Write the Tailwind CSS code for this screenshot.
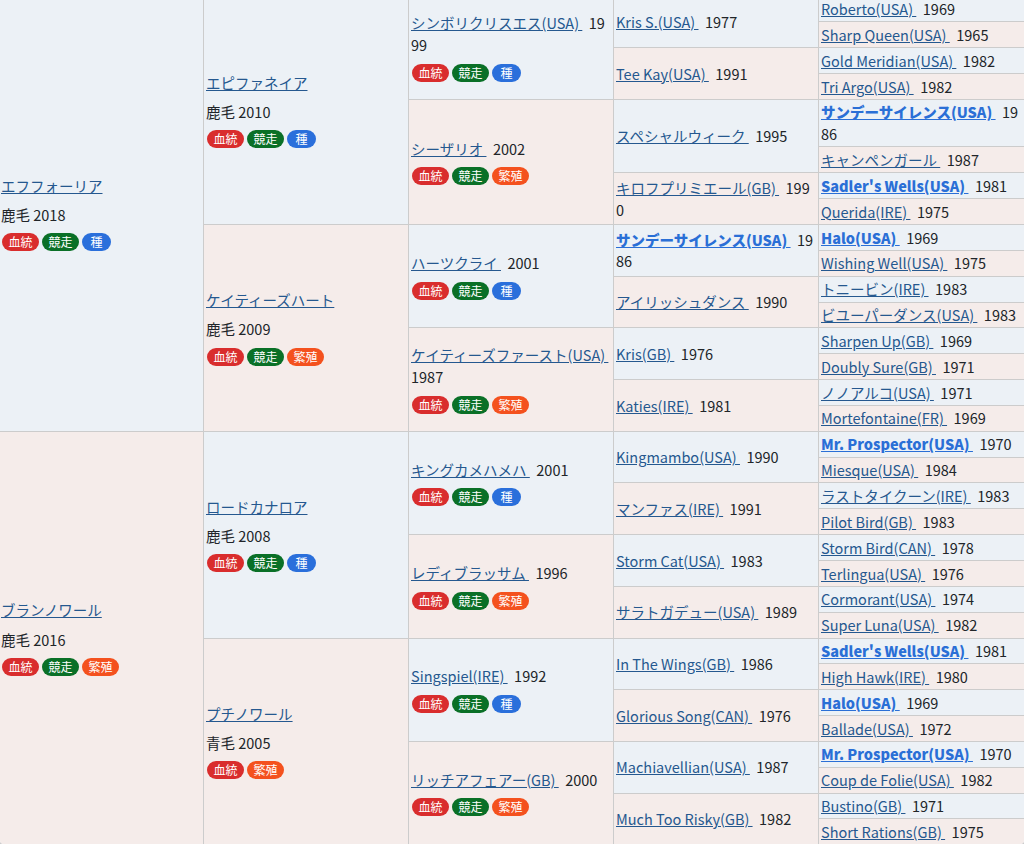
<!DOCTYPE html>
<html lang="ja">
<head>
    <meta charset="UTF-8">
    <meta name="viewport" content="width=device-width, initial-scale=1.0">
    <title>血統表</title>
    <script src="https://cdn.jsdelivr.net/npm/@tailwindcss/browser@4"></script>
</head>
<body class="h-screen overflow-hidden bg-[#ccc] text-[14.5px] leading-[21.75px] text-[#212529] font-['Noto_Sans_CJK_JP',sans-serif]">
  <div class="h-screen overflow-hidden rounded-b-[4px] bg-white">
    <table class="-mt-[4.5px] -ml-[2px] w-[1027px] table-fixed border-collapse break-all [&_td]:border [&_td]:border-[#ccc] [&_td]:px-[2px] [&_td]:py-[1.55px] [&_a]:text-[#25588f] [&_a]:underline [&_a.b]:font-black [&_a.b]:text-[#2a6fd6] [&_.t]:inline-block [&_.t]:h-[18px] [&_.t]:min-w-[29px] [&_.t]:rounded-full [&_.t]:px-[6.5px] [&_.t]:text-center [&_.t]:text-[12px] [&_.t]:leading-[18px] [&_.t]:text-white [&_.p]:flex [&_.p]:gap-[3px] [&_.p]:ml-[1px] [&_.p]:mt-[7.5px] [&_.p]:mb-[8px] [&_.q]:flex [&_.q]:gap-[3px] [&_.q]:ml-[1px] [&_.q]:mt-[8px] [&_.q]:mb-[1px] [&_.n]:mb-[7.5px] [&_.n]:mt-[7px]">
        <tbody>
            <tr>
                <td rowspan="16" class="w-[205px] bg-[#ecf1f6]">
                    <div class="n"><a>エフフォーリア</a></div>
                    <div>鹿毛 2018</div>
                    <div class="p"><span class="t bg-[#d92d2d]">血統</span><span class="t bg-[#0a7027]">競走</span><span class="t bg-[#2a6fdb]">種</span></div>
                </td>
                <td rowspan="8" class="w-[205px] bg-[#ecf1f6]">
                    <div class="n"><a>エピファネイア</a></div>
                    <div>鹿毛 2010</div>
                    <div class="p"><span class="t bg-[#d92d2d]">血統</span><span class="t bg-[#0a7027]">競走</span><span class="t bg-[#2a6fdb]">種</span></div>
                </td>
                <td rowspan="4" class="w-[205px] bg-[#ecf1f6]">
                    <a>シンボリクリスエス(USA)&nbsp;</a>&nbsp; 1999
                    <div class="q"><span class="t bg-[#d92d2d]">血統</span><span class="t bg-[#0a7027]">競走</span><span class="t bg-[#2a6fdb]">種</span></div>
                </td>
                <td rowspan="2" class="w-[205px] bg-[#ecf1f6]"><a>Kris S.(USA)&nbsp;</a>&nbsp; 1977</td>
                <td class="bg-[#ecf1f6]"><a>Roberto(USA)&nbsp;</a>&nbsp; 1969</td>
            </tr>
            <tr><td class="bg-[#f5ecea]"><a>Sharp Queen(USA)&nbsp;</a>&nbsp; 1965</td></tr>
            <tr>
                <td rowspan="2" class="bg-[#f5ecea]"><a>Tee Kay(USA)&nbsp;</a>&nbsp; 1991</td>
                <td class="bg-[#ecf1f6]"><a>Gold Meridian(USA)&nbsp;</a>&nbsp; 1982</td>
            </tr>
            <tr><td class="bg-[#f5ecea]"><a>Tri Argo(USA)&nbsp;</a>&nbsp; 1982</td></tr>
            <tr>
                <td rowspan="4" class="bg-[#f5ecea]">
                    <a>シーザリオ&nbsp;</a>&nbsp; 2002
                    <div class="q"><span class="t bg-[#d92d2d]">血統</span><span class="t bg-[#0a7027]">競走</span><span class="t bg-[#f4511e]">繁殖</span></div>
                </td>
                <td rowspan="2" class="bg-[#ecf1f6]"><a>スペシャルウィーク&nbsp;</a>&nbsp; 1995</td>
                <td class="bg-[#ecf1f6]"><a class="b">サンデーサイレンス(USA)&nbsp;</a>&nbsp; 1986</td>
            </tr>
            <tr><td class="bg-[#f5ecea]"><a>キャンペンガール&nbsp;</a>&nbsp; 1987</td></tr>
            <tr>
                <td rowspan="2" class="bg-[#f5ecea]"><a>キロフプリミエール(GB)&nbsp;</a>&nbsp; 1990</td>
                <td class="bg-[#ecf1f6]"><a class="b">Sadler's Wells(USA)&nbsp;</a>&nbsp; 1981</td>
            </tr>
            <tr><td class="bg-[#f5ecea]"><a>Querida(IRE)&nbsp;</a>&nbsp; 1975</td></tr>
            <tr>
                <td rowspan="8" class="bg-[#f5ecea]">
                    <div class="n"><a>ケイティーズハート</a></div>
                    <div>鹿毛 2009</div>
                    <div class="p"><span class="t bg-[#d92d2d]">血統</span><span class="t bg-[#0a7027]">競走</span><span class="t bg-[#f4511e]">繁殖</span></div>
                </td>
                <td rowspan="4" class="bg-[#ecf1f6]">
                    <a>ハーツクライ&nbsp;</a>&nbsp; 2001
                    <div class="q"><span class="t bg-[#d92d2d]">血統</span><span class="t bg-[#0a7027]">競走</span><span class="t bg-[#2a6fdb]">種</span></div>
                </td>
                <td rowspan="2" class="bg-[#ecf1f6]"><a class="b">サンデーサイレンス(USA)&nbsp;</a>&nbsp; 1986</td>
                <td class="bg-[#ecf1f6]"><a class="b">Halo(USA)&nbsp;</a>&nbsp; 1969</td>
            </tr>
            <tr><td class="bg-[#f5ecea]"><a>Wishing Well(USA)&nbsp;</a>&nbsp; 1975</td></tr>
            <tr>
                <td rowspan="2" class="bg-[#f5ecea]"><a>アイリッシュダンス&nbsp;</a>&nbsp; 1990</td>
                <td class="bg-[#ecf1f6]"><a>トニービン(IRE)&nbsp;</a>&nbsp; 1983</td>
            </tr>
            <tr><td class="bg-[#f5ecea]"><a>ビユーパーダンス(USA)&nbsp;</a>&nbsp; 1983</td></tr>
            <tr>
                <td rowspan="4" class="bg-[#f5ecea]">
                    <a>ケイティーズファースト(USA)&nbsp;</a> 1987
                    <div class="q"><span class="t bg-[#d92d2d]">血統</span><span class="t bg-[#0a7027]">競走</span><span class="t bg-[#f4511e]">繁殖</span></div>
                </td>
                <td rowspan="2" class="bg-[#ecf1f6]"><a>Kris(GB)&nbsp;</a>&nbsp; 1976</td>
                <td class="bg-[#ecf1f6]"><a>Sharpen Up(GB)&nbsp;</a>&nbsp; 1969</td>
            </tr>
            <tr><td class="bg-[#f5ecea]"><a>Doubly Sure(GB)&nbsp;</a>&nbsp; 1971</td></tr>
            <tr>
                <td rowspan="2" class="bg-[#f5ecea]"><a>Katies(IRE)&nbsp;</a>&nbsp; 1981</td>
                <td class="bg-[#ecf1f6]"><a>ノノアルコ(USA)&nbsp;</a>&nbsp; 1971</td>
            </tr>
            <tr><td class="bg-[#f5ecea]"><a>Mortefontaine(FR)&nbsp;</a>&nbsp; 1969</td></tr>
            <tr>
                <td rowspan="16" class="bg-[#f5ecea]">
                    <div class="n"><a>ブランノワール</a></div>
                    <div>鹿毛 2016</div>
                    <div class="p"><span class="t bg-[#d92d2d]">血統</span><span class="t bg-[#0a7027]">競走</span><span class="t bg-[#f4511e]">繁殖</span></div>
                </td>
                <td rowspan="8" class="bg-[#ecf1f6]">
                    <div class="n"><a>ロードカナロア</a></div>
                    <div>鹿毛 2008</div>
                    <div class="p"><span class="t bg-[#d92d2d]">血統</span><span class="t bg-[#0a7027]">競走</span><span class="t bg-[#2a6fdb]">種</span></div>
                </td>
                <td rowspan="4" class="bg-[#ecf1f6]">
                    <a>キングカメハメハ&nbsp;</a>&nbsp; 2001
                    <div class="q"><span class="t bg-[#d92d2d]">血統</span><span class="t bg-[#0a7027]">競走</span><span class="t bg-[#2a6fdb]">種</span></div>
                </td>
                <td rowspan="2" class="bg-[#ecf1f6]"><a>Kingmambo(USA)&nbsp;</a>&nbsp; 1990</td>
                <td class="bg-[#ecf1f6]"><a class="b">Mr. Prospector(USA)&nbsp;</a>&nbsp; 1970</td>
            </tr>
            <tr><td class="bg-[#f5ecea]"><a>Miesque(USA)&nbsp;</a>&nbsp; 1984</td></tr>
            <tr>
                <td rowspan="2" class="bg-[#f5ecea]"><a>マンファス(IRE)&nbsp;</a>&nbsp; 1991</td>
                <td class="bg-[#ecf1f6]"><a>ラストタイクーン(IRE)&nbsp;</a>&nbsp; 1983</td>
            </tr>
            <tr><td class="bg-[#f5ecea]"><a>Pilot Bird(GB)&nbsp;</a>&nbsp; 1983</td></tr>
            <tr>
                <td rowspan="4" class="bg-[#f5ecea]">
                    <a>レディブラッサム&nbsp;</a>&nbsp; 1996
                    <div class="q"><span class="t bg-[#d92d2d]">血統</span><span class="t bg-[#0a7027]">競走</span><span class="t bg-[#f4511e]">繁殖</span></div>
                </td>
                <td rowspan="2" class="bg-[#ecf1f6]"><a>Storm Cat(USA)&nbsp;</a>&nbsp; 1983</td>
                <td class="bg-[#ecf1f6]"><a>Storm Bird(CAN)&nbsp;</a>&nbsp; 1978</td>
            </tr>
            <tr><td class="bg-[#f5ecea]"><a>Terlingua(USA)&nbsp;</a>&nbsp; 1976</td></tr>
            <tr>
                <td rowspan="2" class="bg-[#f5ecea]"><a>サラトガデュー(USA)&nbsp;</a>&nbsp; 1989</td>
                <td class="bg-[#ecf1f6]"><a>Cormorant(USA)&nbsp;</a>&nbsp; 1974</td>
            </tr>
            <tr><td class="bg-[#f5ecea]"><a>Super Luna(USA)&nbsp;</a>&nbsp; 1982</td></tr>
            <tr>
                <td rowspan="8" class="bg-[#f5ecea]">
                    <div class="n"><a>プチノワール</a></div>
                    <div>青毛 2005</div>
                    <div class="p"><span class="t bg-[#d92d2d]">血統</span><span class="t bg-[#f4511e]">繁殖</span></div>
                </td>
                <td rowspan="4" class="bg-[#ecf1f6]">
                    <a>Singspiel(IRE)&nbsp;</a>&nbsp; 1992
                    <div class="q"><span class="t bg-[#d92d2d]">血統</span><span class="t bg-[#0a7027]">競走</span><span class="t bg-[#2a6fdb]">種</span></div>
                </td>
                <td rowspan="2" class="bg-[#ecf1f6]"><a>In The Wings(GB)&nbsp;</a>&nbsp; 1986</td>
                <td class="bg-[#ecf1f6]"><a class="b">Sadler's Wells(USA)&nbsp;</a>&nbsp; 1981</td>
            </tr>
            <tr><td class="bg-[#f5ecea]"><a>High Hawk(IRE)&nbsp;</a>&nbsp; 1980</td></tr>
            <tr>
                <td rowspan="2" class="bg-[#f5ecea]"><a>Glorious Song(CAN)&nbsp;</a>&nbsp; 1976</td>
                <td class="bg-[#ecf1f6]"><a class="b">Halo(USA)&nbsp;</a>&nbsp; 1969</td>
            </tr>
            <tr><td class="bg-[#f5ecea]"><a>Ballade(USA)&nbsp;</a>&nbsp; 1972</td></tr>
            <tr>
                <td rowspan="4" class="bg-[#f5ecea]">
                    <a>リッチアフェアー(GB)&nbsp;</a>&nbsp; 2000
                    <div class="q"><span class="t bg-[#d92d2d]">血統</span><span class="t bg-[#0a7027]">競走</span><span class="t bg-[#f4511e]">繁殖</span></div>
                </td>
                <td rowspan="2" class="bg-[#ecf1f6]"><a>Machiavellian(USA)&nbsp;</a>&nbsp; 1987</td>
                <td class="bg-[#ecf1f6]"><a class="b">Mr. Prospector(USA)&nbsp;</a>&nbsp; 1970</td>
            </tr>
            <tr><td class="bg-[#f5ecea]"><a>Coup de Folie(USA)&nbsp;</a>&nbsp; 1982</td></tr>
            <tr>
                <td rowspan="2" class="bg-[#f5ecea]"><a>Much Too Risky(GB)&nbsp;</a>&nbsp; 1982</td>
                <td class="bg-[#ecf1f6]"><a>Bustino(GB)&nbsp;</a>&nbsp; 1971</td>
            </tr>
            <tr><td class="bg-[#f5ecea]"><a>Short Rations(GB)&nbsp;</a>&nbsp; 1975</td></tr>
        </tbody>
    </table>
  </div>
</body>
</html>
